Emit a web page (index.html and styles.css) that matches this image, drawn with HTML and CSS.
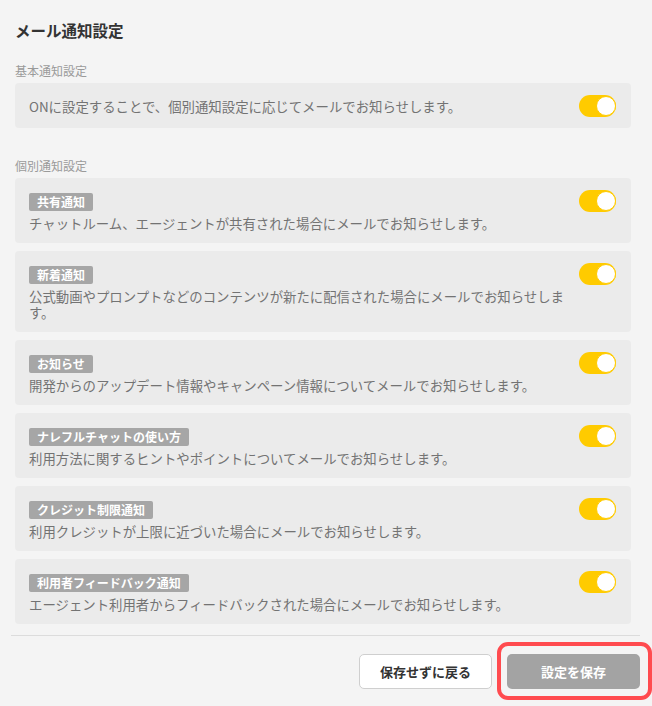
FILE: index.html
```html
<!DOCTYPE html>
<html lang="ja">
<head>
	<meta charset="utf-8">
	<link rel="stylesheet" href="styles.css">
	<title>メール通知設定</title>
</head>
<body>
	<div class="settings">
		<h1 class="title">メール通知設定</h1>

		<div class="group-label">基本通知設定</div>
		<div class="card card-basic">
			<div class="card-body">
				<p class="desc">ONに設定することで、個別通知設定に応じてメールでお知らせします。</p>
			</div>
			<span class="toggle on"></span>
		</div>

		<div class="group-label group-gap">個別通知設定</div>
		<div class="list">
			<div class="card">
				<div class="card-body">
					<span class="tag">共有通知</span>
					<p class="desc">チャットルーム、エージェントが共有された場合にメールでお知らせします。</p>
				</div>
				<span class="toggle on"></span>
			</div>
			<div class="card">
				<div class="card-body">
					<span class="tag">新着通知</span>
					<p class="desc">公式動画やプロンプトなどのコンテンツが新たに配信された場合にメールでお知らせします。</p>
				</div>
				<span class="toggle on"></span>
			</div>
			<div class="card">
				<div class="card-body">
					<span class="tag">お知らせ</span>
					<p class="desc">開発からのアップデート情報やキャンペーン情報についてメールでお知らせします。</p>
				</div>
				<span class="toggle on"></span>
			</div>
			<div class="card">
				<div class="card-body">
					<span class="tag">ナレフルチャットの使い方</span>
					<p class="desc">利用方法に関するヒントやポイントについてメールでお知らせします。</p>
				</div>
				<span class="toggle on"></span>
			</div>
			<div class="card">
				<div class="card-body">
					<span class="tag">クレジット制限通知</span>
					<p class="desc">利用クレジットが上限に近づいた場合にメールでお知らせします。</p>
				</div>
				<span class="toggle on"></span>
			</div>
			<div class="card">
				<div class="card-body">
					<span class="tag">利用者フィードバック通知</span>
					<p class="desc">エージェント利用者からフィードバックされた場合にメールでお知らせします。</p>
				</div>
				<span class="toggle on"></span>
			</div>
		</div>
	</div>

	<div class="footer">
		<button class="btn btn-back">保存せずに戻る</button>
		<span class="save-wrap">
			<button class="btn btn-save">設定を保存</button>
			<span class="highlight"></span>
		</span>
	</div>
</body>
</html>
```

FILE: styles.css
```css
html {
	background-color: #f4f4f4;
}
body {
	margin: 0;
	height: 706px;
	overflow: hidden;
	background-color: #f4f4f4;
	font-family: "Noto Sans CJK JP", "Noto Sans", sans-serif;
	color: #333;
}

.settings {
	width: 616px;
	padding: 19px 0 0 15px;
}
.title {
	margin: 0;
	font-size: 15.5px;
	line-height: 22px;
	font-weight: bold;
	color: #333;
}
.group-label {
	margin-top: 21px;
	font-size: 12px;
	line-height: 18px;
	color: #9a9a9a;
}
.group-gap {
	margin-top: 29px;
}

.card {
	display: flex;
	align-items: flex-start;
	justify-content: space-between;
	margin-top: 3px;
	padding: 15px 15px 12px 14px;
	background-color: #ebebeb;
	border-radius: 4px;
}
.card-basic {
	align-items: center;
	height: 45px;
	padding: 0 15px 0 14px;
	box-sizing: border-box;
}
.list {
	display: flex;
	flex-direction: column;
	gap: 8px;
	margin-top: 3px;
}
.list .card {
	margin-top: 0;
}
.card-body {
	flex: 1;
	padding-right: 10px;
}
.tag {
	display: block;
	width: fit-content;
	height: 18px;
	line-height: 18px;
	padding: 0 8px;
	background-color: #a6a6a6;
	border-radius: 2px;
	color: #fff;
	font-size: 12px;
	font-weight: bold;
}
.desc {
	margin: 4px 0 0 0;
	font-size: 13.4px;
	line-height: 16px;
	color: #737373;
}
.card-basic .desc {
	margin: 0;
}

.toggle {
	position: relative;
	flex: none;
	width: 37px;
	height: 22px;
	margin-top: -3px;
	border-radius: 11px;
	background-color: #ccc;
}
.card-basic .toggle {
	margin-top: 0;
}
.toggle.on {
	background-color: #ffcb00;
}
.toggle::after {
	content: "";
	position: absolute;
	top: 1px;
	left: 1px;
	width: 18px;
	height: 18px;
	border: 1px solid #ffcb00;
	border-radius: 50%;
	background-color: #fff;
}
.toggle.on::after {
	left: auto;
	right: 0;
}

.footer {
	display: flex;
	justify-content: flex-end;
	gap: 15px;
	width: 629px;
	margin: 11px 0 0 11px;
	padding-top: 18px;
	border-top: 1px solid #dcdcdc;
}
.btn {
	width: 133px;
	height: 35px;
	border-radius: 5px;
	font-family: "Noto Sans CJK JP", "Noto Sans", sans-serif;
	font-size: 13px;
	font-weight: bold;
	cursor: pointer;
}
.btn-back {
	background-color: #fff;
	border: 1px solid #cfcfcf;
	color: #333;
}
.btn-save {
	background-color: #a3a3a3;
	border: none;
	color: #fff;
}
.save-wrap {
	position: relative;
	display: inline-block;
}
.highlight {
	position: absolute;
	top: -12px;
	left: -10px;
	width: 155px;
	height: 58px;
	box-sizing: border-box;
	border: 4px solid #ff4b4f;
	border-radius: 11px;
}
```
